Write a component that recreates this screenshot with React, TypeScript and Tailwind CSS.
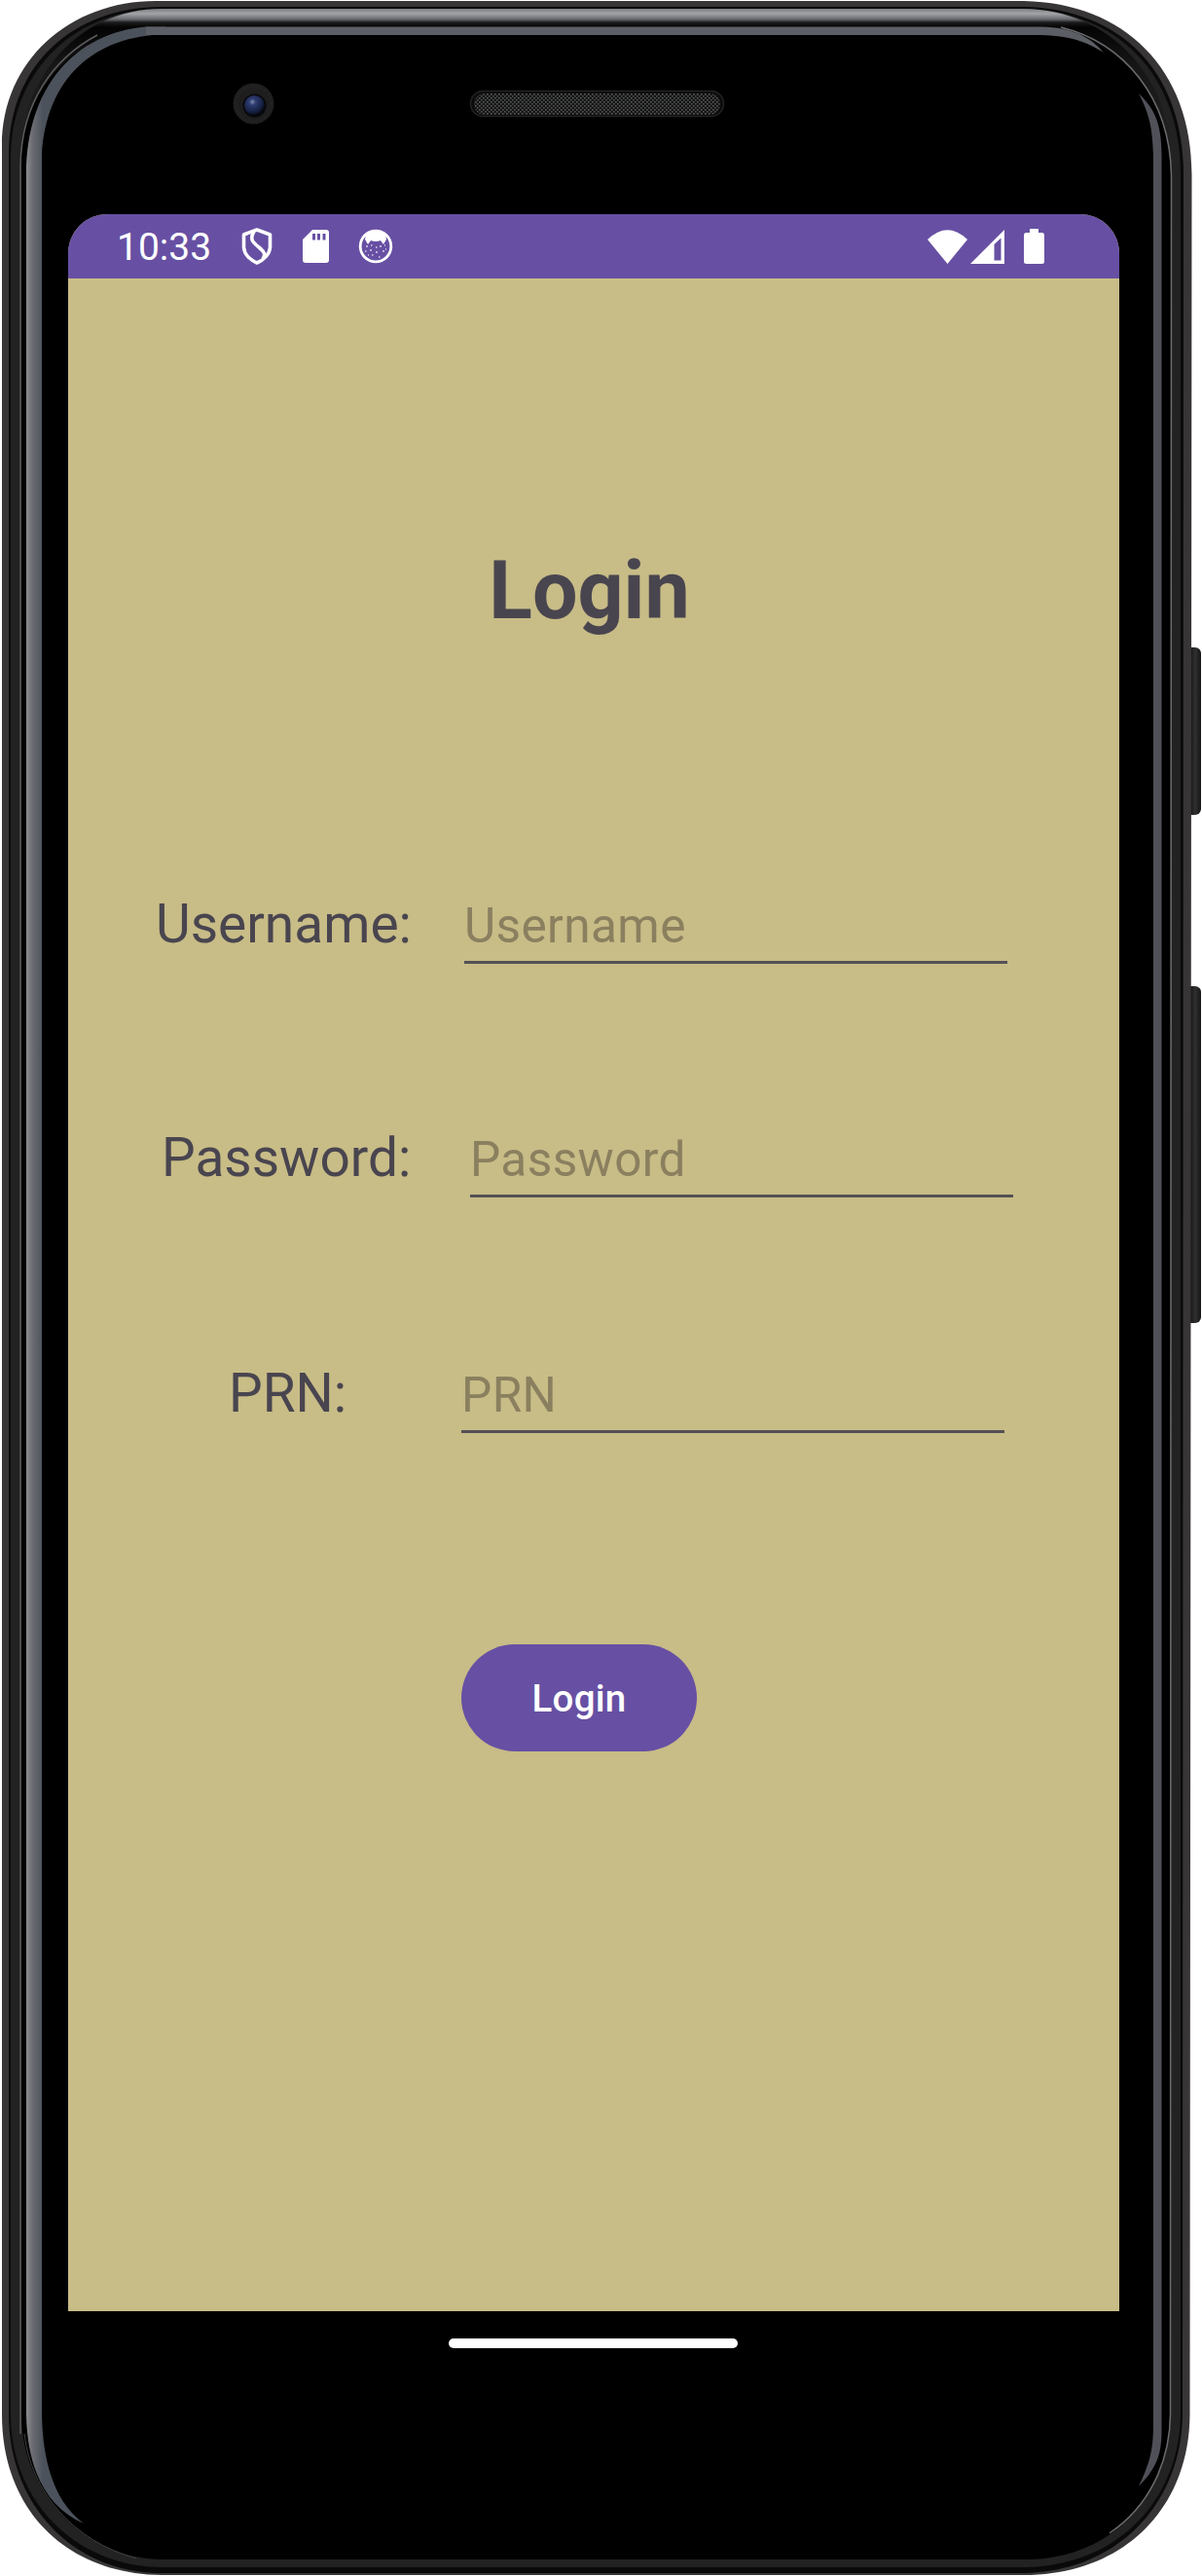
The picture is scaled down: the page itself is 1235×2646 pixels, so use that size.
import React from "react";

function PhoneFrame() {
  return (
    <svg className="absolute inset-0" width="1235" height="2646" viewBox="0 0 1235 2646" fill="none" aria-hidden="true">
      <defs>
        <linearGradient id="topShine" x1="0" y1="8" x2="0" y2="28" gradientUnits="userSpaceOnUse">
          <stop offset="0" stopColor="#75777b" />
          <stop offset="0.3" stopColor="#a2a4a8" />
          <stop offset="0.6" stopColor="#66676b" />
          <stop offset="0.75" stopColor="#1c1c1e" />
          <stop offset="1" stopColor="#000" />
        </linearGradient>
        <linearGradient id="rimFade" x1="0" y1="0" x2="0" y2="150" gradientUnits="userSpaceOnUse">
          <stop offset="0" stopColor="#fff" />
          <stop offset="0.13" stopColor="#fff" />
          <stop offset="0.45" stopColor="#555" />
          <stop offset="1" stopColor="#000" />
        </linearGradient>
        <mask id="rimMask" maskUnits="userSpaceOnUse" x="0" y="0" width="1235" height="2646">
          <rect width="1235" height="2646" fill="url(#rimFade)" />
        </mask>
        <linearGradient id="leftGlass" x1="26" y1="0" x2="44" y2="0" gradientUnits="userSpaceOnUse">
          <stop offset="0" stopColor="#929294" />
          <stop offset="0.4" stopColor="#6b6d73" />
          <stop offset="1" stopColor="#4c525b" />
        </linearGradient>
        <linearGradient id="key" x1="1222" y1="0" x2="1234" y2="0" gradientUnits="userSpaceOnUse">
          <stop offset="0" stopColor="#101010" />
          <stop offset="0.5" stopColor="#303030" />
          <stop offset="1" stopColor="#151515" />
        </linearGradient>
        <radialGradient id="lens" cx="0.4" cy="0.32" r="0.65">
          <stop offset="0" stopColor="#7d8bb0" />
          <stop offset="0.25" stopColor="#2d3b70" />
          <stop offset="0.75" stopColor="#172143" />
          <stop offset="1" stopColor="#07090f" />
        </radialGradient>
        <pattern id="mesh" width="4" height="4" patternUnits="userSpaceOnUse">
          <rect width="4" height="4" fill="#151515" />
          <rect width="1.600" height="1.600" fill="#585b59" />
          <rect x="2" y="2" width="1.600" height="1.600" fill="#505351" />
        </pattern>
      </defs>
      <rect x="1218" y="665" width="16" height="172" rx="6" fill="url(#key)" />
      <rect x="1218" y="1013" width="16" height="346" rx="6" fill="url(#key)" />
      <path d="M160 1H1052C1156 3 1225 72 1224.500 180L1222.500 2480C1222 2575 1156 2645 1052 2645H166C70 2644 2 2580 2 2480V150C2 62 72 1 160 1Z" fill="#373536" />
      <path d="M166 7H1052C1150 9 1216 72 1216 180L1215 2480C1214 2570 1150 2641 1052 2643H166C74 2643 9 2572 9 2480V156C10 66 76 7 166 7Z" fill="#0a0a0a" />
      <path d="M166 9H1052C1146 11 1213 74 1213 180V2480C1212 2566 1150 2636 1052 2637H166C76 2636 11 2568 11 2480V160C12 70 80 9 166 9Z" fill="#222222" />
      <g mask="url(#rimMask)">
        <path d="M20 170C20 78 82 9 166 9H1052C1140 10 1206 78 1206 180L1202 180C1200 84 1130 28 1052 28H166C90 28 24 90 24 170Z" fill="url(#topShine)" />
      </g>
      <path d="M166 27H1052C1136 27 1202.500 86 1203 180L1202 2480C1202 2560 1146 2626 1060 2629H166C86 2628 22 2560 22 2480V170C22 84 86 27 166 27Z" fill="#000" />
      <path d="M21 2500V170C22 105 55 60 100 36" stroke="#5c5c5f" strokeWidth="1.500" />
      <path d="M1090 28C1155 44 1202 100 1203.500 180L1202.500 2480C1202 2530 1180 2575 1140 2602" stroke="#6c6c70" strokeWidth="1.500" />
      <path d="M25 2500C32 2560 75 2610 140 2628" stroke="#414141" strokeWidth="1" />
      <path d="M170 27.500H150C76 34 27 90 27 180V2480C28 2534 46 2575 86 2592C56 2570 44 2530 43 2480V160C47 80 98 36 170 35.500Z" fill="url(#leftGlass)" />
      <path d="M150 27.500H1070C1103 28 1121 39 1134 54C1119 45 1104 37 1070 36H150Z" fill="#5c5e65" />
      <path d="M1170 96C1185 111 1193.500 124 1193.500 160V2500C1193 2525 1186 2537 1170 2554C1180 2532 1185 2520 1185 2490V160C1184 130 1181 118 1170 96Z" fill="#505158" />
      <circle cx="260.500" cy="106.500" r="21" fill="#1e1e1e" />
      <circle cx="260.500" cy="106.500" r="18" stroke="#272727" strokeWidth="3" strokeDasharray="1 2" />
      <circle cx="261.500" cy="108.500" r="12" fill="#07080b" />
      <circle cx="261.500" cy="108.500" r="10.500" fill="url(#lens)" />
      <rect x="483.500" y="93.500" width="260" height="26" rx="13" fill="#0c0c0c" stroke="#222225" strokeWidth="1.500" />
      <rect x="487" y="96" width="253" height="22" rx="11" fill="url(#mesh)" />
    </svg>
  );
}

function ShieldIcon() {
  return (
    <svg width="32" height="38" viewBox="0 0 32 38" fill="none" stroke="#fff" strokeWidth="3.600" strokeLinejoin="round">
      <path d="M16 2L29.500 7V19C29.500 27 23 33 16 36C9 33 2.500 27 2.500 19V7Z" />
      <path d="M13 3.500C8 12 12 15 18 20C24 25 25 27 22 32" />
    </svg>
  );
}

function SdCardIcon() {
  return (
    <svg width="27" height="34" viewBox="0 0 27 34">
      <path fillRule="evenodd" fill="#fff" d="M10 0H24Q27 0 27 3V31Q27 34 24 34H3Q0 34 0 31V10ZM10 4V10.500H13V4ZM15 4V10.500H18V4ZM20.500 4V10.500H23.500V4Z" />
    </svg>
  );
}

function CatIcon() {
  return (
    <svg width="36" height="36" viewBox="0 0 36 36" fill="none">
      <circle cx="18" cy="18" r="15.800" stroke="#fff" strokeWidth="2.800" />
      <path d="M8 5Q18 -1 28 5L29 11L26 16L23 12Q18 14 13 12L10 16L7 11Z" fill="#fff" />
      <path d="M8 18h2M13 17h1.500M22 18h2M27 17h1M7 23h1.500M12 22h2M18 19h1.500M18 24h2M25 23h2M14 27h1.500M21 29h1.500M10 27h1M28 21h1" stroke="#d9d0ec" strokeWidth="1.300" />
    </svg>
  );
}

function StatusBar() {
  return (
    <div className="flex h-[66px] items-center bg-[#6750a3] pl-[50px] pr-[77px] text-white">
      <span className="w-[98px] whitespace-nowrap pt-[3px] text-[39px] leading-none">10:33</span>
      <div className="ml-[30px] flex items-center">
        <ShieldIcon />
        <div className="ml-[31px]"><SdCardIcon /></div>
        <div className="ml-[30px]"><CatIcon /></div>
      </div>
      <div className="ml-auto flex items-center">
        <svg width="41" height="35" viewBox="0 0 42 35" preserveAspectRatio="none"><path d="M0 10Q21 -9.500 42 10L21 35Z" fill="#fff" /></svg>
        <svg className="ml-[3px]" width="35" height="35" viewBox="0 0 35 35"><path fillRule="evenodd" d="M35 0V35H0ZM24.500 15V31.500H31.500V8.500Z" fill="#fff" /></svg>
        <svg className="ml-[20px]" width="21" height="36" viewBox="0 0 21 36"><path d="M6 0H15V4H18.500Q21 4 21 6.500V33.500Q21 36 18.500 36H2.500Q0 36 0 33.500V6.500Q0 4 2.500 4H6Z" fill="#fff" /></svg>
      </div>
    </div>
  );
}

type FieldProps = { label: string; hint: string; row: string; labelClass: string };

function Field({ label, hint, row, labelClass }: FieldProps) {
  return (
    <label className={`flex h-[90px] items-start ${row}`}>
      <span className={`whitespace-nowrap pt-px text-[55px] leading-[64px] text-[#49454f] ${labelClass}`}>{label}</span>
      <input
        type="text"
        placeholder={hint}
        className="h-[74px] w-[558px] rounded-none border-b-[3px] border-[#545055] bg-transparent p-0 pb-[2px] text-[49.500px] leading-[60px] tracking-[0.4px] text-[#49454f] outline-none placeholder:text-[#8a805f]"
      />
    </label>
  );
}

export default function App() {
  return (
    <main className="relative h-[2646px] w-[1235px] overflow-hidden bg-white font-['Roboto',sans-serif]">
      <PhoneFrame />
      <div className="relative flex h-full flex-col pl-[70px] pt-[220px]">
        <section className="flex h-[2154px] w-[1080px] flex-col overflow-hidden rounded-t-[40px] bg-[#c8bc87]">
          <StatusBar />
          <h1 className="mt-[272px] w-[1071px] text-center text-[82.500px] font-bold leading-[97px] text-[#49454f]">Login</h1>
          <form className="flex flex-col">
            <Field label="Username:" hint="Username" row="mt-[261px] pl-[90px]" labelClass="w-[317px]" />
            <Field label="Password:" hint="Password" row="mt-[150px] pl-[96px]" labelClass="w-[317px]" />
            <Field label="PRN:" hint="PRN" row="mt-[152px] pl-[165px]" labelClass="w-[239px]" />
            <button type="button" className="ml-[404px] mt-[201px] h-[110px] w-[242px] rounded-full bg-[#6750a3] pt-[2px] text-[38.500px] font-medium tracking-[0.3px] text-white">Login</button>
          </form>
        </section>
        <div className="ml-[391px] mt-[28px] h-[10px] w-[297px] rounded-full bg-white" />
      </div>
    </main>
  );
}
